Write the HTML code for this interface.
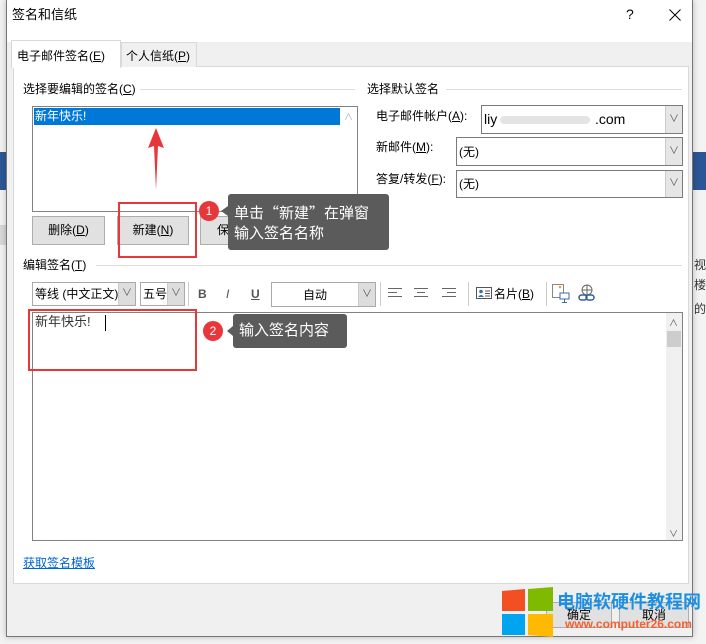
<!DOCTYPE html>
<html><head><meta charset="utf-8"><style>
*{margin:0;padding:0;box-sizing:border-box}
body{width:706px;height:644px;position:relative;overflow:hidden;background:#f3f3f3;font-family:"Liberation Sans","Noto Sans CJK SC",sans-serif;font-size:12px;color:#000}
.a{position:absolute}
.t{position:absolute;white-space:nowrap;font-size:12px;line-height:14px}
.btn{position:absolute;background:#e1e1e1;border:1px solid #adadad;text-align:center;font-size:12px}
.combo{position:absolute;background:#fff;border:1px solid #7a7a7a}
.dd{position:absolute;right:0;top:0;bottom:0;width:17px;background:#e6e6e6;border-left:1px solid #ccc;color:#555;font-size:10px;text-align:center}
.sep{position:absolute;width:1px;background:#ccc}
u{text-decoration:underline}
</style></head><body>
<div class="a" style="left:0;top:152px;width:7px;height:38px;background:#2b5797"></div>
<div class="a" style="left:0;top:225px;width:7px;height:20px;background:#d8d8d8"></div>
<div class="a" style="left:692px;top:152px;width:14px;height:38px;background:#2b5797"></div>
<div class="t" style="left:694px;top:258px;color:#333">视</div>
<div class="t" style="left:694px;top:278px;color:#333">楼</div>
<div class="t" style="left:694px;top:302px;color:#333">的</div>
<div class="a" style="left:6px;top:0;width:687px;height:637px;background:#f0f0f0;border:1px solid #777;border-top:none;box-shadow:0 0 6px rgba(0,0,0,.25)"></div>
<div class="a" style="left:7px;top:0;width:685px;height:42px;background:#fff"></div>
<div class="t" style="left:12px;top:8px;font-size:13px">签名和信纸</div>
<div class="t" style="left:626px;top:7px;font-size:14px">?</div>
<svg class="a" style="left:669px;top:9px" width="12" height="12" stroke="#000" stroke-width="1"><path d="M0.5 0.5L11.5 11.5M11.5 0.5L0.5 11.5"/></svg>
<div class="a" style="left:13px;top:66px;width:676px;height:518px;background:#fff;border:1px solid #d9d9d9"></div>
<div class="a" style="left:121px;top:42px;width:76px;height:25px;background:#f0f0f0;border:1px solid #d9d9d9;border-bottom:none"></div>
<div class="t" style="left:126px;top:49px">个人信纸(<u>P</u>)</div>
<div class="a" style="left:11px;top:40px;width:110px;height:28px;background:#fff;border:1px solid #d9d9d9;border-bottom:none"></div>
<div class="t" style="left:17px;top:49px">电子邮件签名(<u>E</u>)</div>
<div class="t" style="left:23px;top:82px">选择要编辑的签名(<u>C</u>)</div>
<div class="a" style="left:140px;top:89px;width:215px;height:1px;background:#ddd"></div>
<div class="t" style="left:367px;top:82px">选择默认签名</div>
<div class="a" style="left:446px;top:89px;width:236px;height:1px;background:#ddd"></div>
<div class="a" style="left:32px;top:106px;width:326px;height:106px;border:1px solid #828282;background:#fff"></div>
<div class="a" style="left:34px;top:108px;width:306px;height:17px;background:#0078d7"></div>
<div class="t" style="left:35px;top:109px;color:#fff">新年快乐!</div>
<div class="t" style="left:344px;top:110px;color:#aaa;font-size:9px">∧</div>
<div class="btn" style="left:32px;top:216px;width:73px;height:29px;line-height:27px">删除(<u>D</u>)</div>
<div class="btn" style="left:117px;top:216px;width:72px;height:29px;line-height:27px">新建(<u>N</u>)</div>
<div class="btn" style="left:200px;top:216px;width:74px;height:29px;line-height:27px">保存(<u>S</u>)</div>
<div class="btn" style="left:285px;top:216px;width:73px;height:29px;line-height:27px">重命名(<u>R</u>)</div>
<div class="t" style="left:376px;top:109px">电子邮件帐户(<u>A</u>):</div>
<div class="combo" style="left:481px;top:105px;width:202px;height:29px"><div class="dd" style="line-height:27px">∨</div></div>
<div class="t" style="left:484px;top:112px;font-size:14px">liy</div>
<div class="a" style="left:500px;top:116px;width:90px;height:8px;background:#e4e4e4;border-radius:4px"></div>
<div class="t" style="left:595px;top:112px;font-size:14px">.com</div>
<div class="t" style="left:376px;top:140px">新邮件(<u>M</u>):</div>
<div class="combo" style="left:456px;top:137px;width:227px;height:29px"><div class="dd" style="line-height:27px">∨</div></div>
<div class="t" style="left:459px;top:145px">(无)</div>
<div class="t" style="left:376px;top:172px">答复/转发(<u>F</u>):</div>
<div class="combo" style="left:456px;top:170px;width:227px;height:28px"><div class="dd" style="line-height:26px">∨</div></div>
<div class="t" style="left:459px;top:177px">(无)</div>
<div class="a" style="left:228px;top:194px;width:161px;height:56px;background:#5b5b5b;border-radius:3px"></div>
<div class="t" style="left:234px;top:203px;color:#fff;font-size:15px;line-height:20px;font-family:'Noto Sans CJK SC',sans-serif">单击“新建”在弹窗<br>输入签名名称</div>
<div class="a" style="left:199px;top:201px;width:20px;height:20px;border-radius:50%;background:#e8373a;color:#fff;font-size:12px;text-align:center;line-height:20px">1</div>
<div class="a" style="left:221px;top:206px;width:0;height:0;border:5px solid transparent;border-right:7px solid #5b5b5b;border-left:none"></div>
<div class="a" style="left:118px;top:202px;width:79px;height:56px;border:2px solid #e8373a"></div>
<svg class="a" style="left:146px;top:128px" width="20" height="62"><polygon points="10,0 18,20 12,18 10,62 8,18 2,20" fill="#e8373a"/></svg>
<div class="t" style="left:23px;top:258px">编辑签名(<u>T</u>)</div>
<div class="a" style="left:96px;top:265px;width:586px;height:1px;background:#ddd"></div>
<div class="combo" style="left:32px;top:282px;width:104px;height:24px;border-color:#aaa"><div class="dd" style="line-height:22px;background:#ddd">∨</div></div>
<div class="t" style="left:35px;top:287px">等线 (中文正文)</div>
<div class="combo" style="left:140px;top:282px;width:45px;height:24px;border-color:#aaa"><div class="dd" style="line-height:22px;background:#ddd">∨</div></div>
<div class="t" style="left:143px;top:287px">五号</div>
<div class="sep" style="left:188px;top:282px;height:24px"></div>
<div class="t" style="left:198px;top:287px;font-weight:bold;color:#555">B</div>
<div class="t" style="left:226px;top:287px;font-style:italic;color:#555">I</div>
<div class="t" style="left:251px;top:287px;text-decoration:underline;color:#555;font-weight:bold">U</div>
<div class="combo" style="left:271px;top:282px;width:105px;height:25px;border-color:#aaa"><div class="dd" style="line-height:23px;background:#ddd">∨</div></div>
<div class="t" style="left:303px;top:288px">自动</div>
<div class="sep" style="left:380px;top:282px;height:24px"></div>
<svg class="a" style="left:388px;top:287px" width="70" height="12" stroke="#666" stroke-width="1"><path d="M0 1.5h14M0 5.5h9M0 9.5h14M26 1.5h14M29 5.5h8M26 9.5h14M54 1.5h14M59 5.5h9M54 9.5h14"/></svg>
<div class="sep" style="left:468px;top:282px;height:24px"></div>
<svg class="a" style="left:476px;top:287px" width="16" height="12"><rect x=".5" y=".5" width="15" height="11" fill="#fff" stroke="#555"/><circle cx="5" cy="4.5" r="1.8" fill="#3a6ea5"/><path d="M2 10q3-4 6 0z" fill="#3a6ea5"/><path d="M9 4h5M9 6.5h5M9 9h5" stroke="#555"/></svg>
<div class="t" style="left:494px;top:287px">名片(<u>B</u>)</div>
<div class="sep" style="left:546px;top:282px;height:24px"></div>
<svg class="a" style="left:552px;top:284px" width="18" height="20"><rect x=".5" y=".5" width="11" height="13" fill="#fff" stroke="#888"/><circle cx="8" cy="3" r="1.3" fill="#e8a53a"/><rect x="8" y="9" width="9" height="6" fill="#fff" stroke="#3a6ea5"/><path d="M12.5 15v3M10 18.5h5" stroke="#3a6ea5"/></svg>
<svg class="a" style="left:578px;top:283px" width="18" height="20" fill="none" stroke="#2e5e9e" stroke-width="1.5"><circle cx="9" cy="7" r="5" stroke="#666" stroke-width="1"/><path d="M4 7h10M9 2v10" stroke="#666" stroke-width="1"/><rect x="1" y="12" width="8" height="5" rx="2.5"/><rect x="8" y="12" width="8" height="5" rx="2.5"/></svg>
<div class="a" style="left:32px;top:312px;width:651px;height:229px;border:1px solid #828282;background:#fff"></div>
<div class="a" style="left:666px;top:313px;width:16px;height:227px;background:#f0f0f0"></div>
<div class="a" style="left:667px;top:331px;width:14px;height:16px;background:#cdcdcd"></div>
<div class="t" style="left:669px;top:316px;font-size:9px;color:#555">∧</div>
<div class="t" style="left:669px;top:527px;font-size:9px;color:#555">∨</div>
<div class="t" style="left:35px;top:315px;font-size:13px;color:#333">新年快乐!</div>
<div class="a" style="left:105px;top:315px;width:1px;height:16px;background:#000"></div>
<div class="a" style="left:28px;top:309px;width:169px;height:62px;border:2px solid #e8373a"></div>
<div class="a" style="left:203px;top:321px;width:20px;height:20px;border-radius:50%;background:#e8373a;color:#fff;font-size:12px;text-align:center;line-height:20px">2</div>
<div class="a" style="left:227px;top:326px;width:0;height:0;border:5px solid transparent;border-right:6px solid #5b5b5b;border-left:none"></div>
<div class="a" style="left:233px;top:314px;width:114px;height:34px;background:#5b5b5b;border-radius:3px"></div>
<div class="t" style="left:239px;top:322px;color:#fff;font-size:15px;line-height:18px">输入签名内容</div>
<div class="t" style="left:23px;top:556px;color:#0066cc;text-decoration:underline">获取签名模板</div>
<div class="btn" style="left:546px;top:602px;width:66px;height:26px;line-height:24px">确定</div>
<div class="btn" style="left:619px;top:602px;width:70px;height:26px;line-height:24px">取消</div>
<svg class="a" style="left:502px;top:587px" width="52" height="52"><polygon points="0,4 23,2 23,24 0,24" fill="#f25022"/><polygon points="26,2 51,0 51,24 26,24" fill="#7fba00"/><polygon points="0,27 23,27 23,48 0,48" fill="#00a4ef"/><polygon points="26,27 51,27 51,50 26,48" fill="#ffb900"/></svg>
<div class="t" style="left:557px;top:591px;font-size:18px;line-height:22px;font-weight:bold;color:#1e8fe0;letter-spacing:0">电脑软硬件教程网</div>
<div class="t" style="left:565px;top:617px;font-size:12px;font-weight:bold;color:#f06030">www.computer26.com</div>
</body></html>
